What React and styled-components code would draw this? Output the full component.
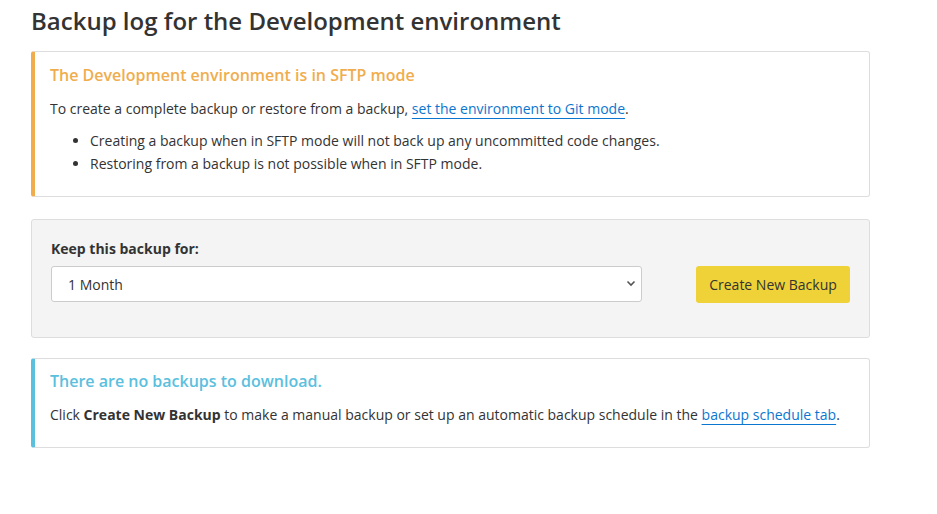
import React from 'react';
import styled, { createGlobalStyle } from 'styled-components';

const GlobalStyle = createGlobalStyle`
  body {
    margin: 0;
    background: #fff;
    font-family: "Open Sans", "Noto Sans", sans-serif;
    font-size: 14px;
    color: #333;
  }
`;

const Page = styled.div`
  width: 839px;
  padding: 0 31px;
`;

const Title = styled.h1`
  margin: 0;
  padding-top: 4px;
  height: 47px;
  font-size: 24px;
  font-weight: 600;
  line-height: 33px;
  color: #333;
`;

const Alert = styled.div`
  border: 1px solid #ddd;
  border-left: 4px solid ${({ accent }) => accent};
  border-radius: 3px;
  padding: ${({ top }) => top}px 15px 14px;
  margin-bottom: 22px;
`;

const AlertHeading = styled.h4`
  margin: 0 0 11px;
  font-size: 16px;
  font-weight: 600;
  line-height: 24px;
  color: ${({ accent }) => accent};
`;

const Text = styled.p`
  margin: 0 0 9px;
  line-height: 22px;

  &:last-child {
    margin-bottom: 7px;
  }
`;

const List = styled.ul`
  margin: 0 0 7px;
  padding-left: 40px;
  line-height: 23px;
`;

const TextLink = styled.a`
  color: #0b76d0;
  text-decoration: underline;
  text-underline-offset: 4px;
  text-decoration-thickness: 1px;
`;

const Well = styled.div`
  background: #f4f4f4;
  border: 1px solid #ddd;
  border-radius: 3px;
  padding: 19px 19px 35px;
  margin-bottom: 20px;
  display: flex;
  align-items: flex-end;
`;

const Field = styled.div`
  width: 591px;
  display: flex;
  flex-direction: column;
`;

const Label = styled.label`
  font-weight: 700;
  line-height: 20px;
  margin-bottom: 7px;
`;

const SelectWrap = styled.div`
  position: relative;
`;

const Select = styled.select`
  appearance: none;
  width: 100%;
  height: 36px;
  padding: 0 16px;
  background: #fff;
  border: 1px solid #ccc;
  border-radius: 3px;
  font-family: inherit;
  font-size: 14px;
  color: #333;
`;

const Chevron = styled.svg`
  position: absolute;
  right: 6px;
  top: 14px;
  pointer-events: none;
`;

const Button = styled.button`
  margin-left: auto;
  margin-bottom: -1px;
  width: 154px;
  height: 37px;
  background: #efd237;
  border: none;
  border-radius: 3px;
  font-family: inherit;
  font-size: 14px;
  color: #333;
`;

export default function App() {
  return (
    <Page>
      <GlobalStyle />
      <Title>Backup log for the Development environment</Title>

      <Alert accent="#f0ad4e" top={11}>
        <AlertHeading accent="#f0ad4e">The Development environment is in SFTP mode</AlertHeading>
        <Text>
          To create a complete backup or restore from a backup,{' '}
          <TextLink href="#">set the environment to Git mode</TextLink>.
        </Text>
        <List>
          <li>Creating a backup when in SFTP mode will not back up any uncommitted code changes.</li>
          <li>Restoring from a backup is not possible when in SFTP mode.</li>
        </List>
      </Alert>

      <Well>
        <Field>
          <Label htmlFor="keep">Keep this backup for:</Label>
          <SelectWrap>
            <Select id="keep" defaultValue="1m">
              <option value="1m">1 Month</option>
              <option value="6m">6 Months</option>
              <option value="1y">1 Year</option>
            </Select>
            <Chevron width="10" height="7" viewBox="0 0 10 7">
              <path d="M1.5 1.5 L5 5 L8.5 1.5" fill="none" stroke="#555" strokeWidth="1.6" />
            </Chevron>
          </SelectWrap>
        </Field>
        <Button>Create New Backup</Button>
      </Well>

      <Alert accent="#5bc0de" top={10}>
        <AlertHeading accent="#5bc0de">There are no backups to download.</AlertHeading>
        <Text>
          Click <strong>Create New Backup</strong> to make a manual backup or set up an automatic
          backup schedule in the <TextLink href="#">backup schedule tab</TextLink>.
        </Text>
      </Alert>
    </Page>
  );
}
